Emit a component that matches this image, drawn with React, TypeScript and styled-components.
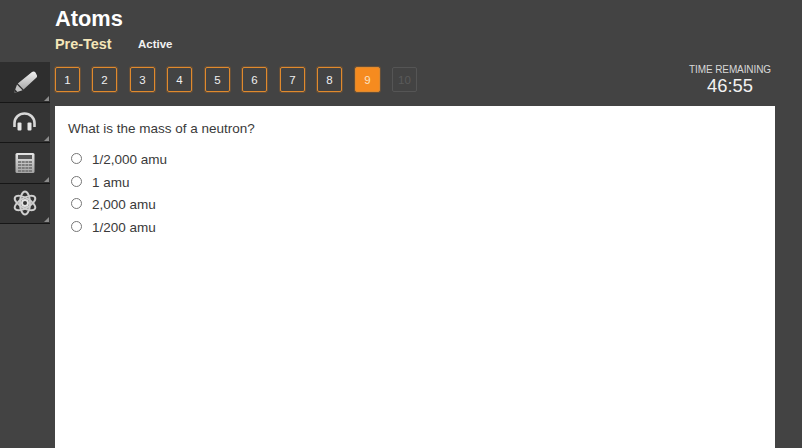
import React from 'react';
import styled, { createGlobalStyle } from 'styled-components';

const GlobalStyle = createGlobalStyle`
  html, body {
    margin: 0;
    height: 100%;
    background: #434343;
    font-family: "Liberation Sans", Arial, sans-serif;
    overflow: hidden;
  }
`;

const Page = styled.div`
  width: 802px;
  height: 448px;
  overflow: hidden;
  display: flex;
  background: #434343;
`;

const Sidebar = styled.nav`
  width: 50px;
  padding-top: 62px;
  margin-right: 5px;
  flex: none;
`;

const ToolButton = styled.div<{ $active?: boolean }>`
  position: relative;
  width: 50px;
  height: 40.5px;
  box-sizing: border-box;
  display: flex;
  align-items: center;
  justify-content: center;
  background: ${(p) => (p.$active ? '#2e2e2e' : '#343434')};
  border-bottom: 1px solid #161616;
  &::after {
    content: '';
    position: absolute;
    right: 1px;
    bottom: 1px;
    border-style: solid;
    border-width: 0 0 5px 5px;
    border-color: transparent transparent #8c8c8c transparent;
  }
`;

const Main = styled.main`
  width: 720px;
  flex: none;
  display: flex;
  flex-direction: column;
`;

const Header = styled.header`
  height: 62px;
  padding-top: 6px;
  box-sizing: border-box;
`;

const Title = styled.h1`
  margin: 0;
  font-size: 21.8px;
  line-height: 25px;
  font-weight: 700;
  color: #fff;
`;

const SubRow = styled.div`
  display: flex;
  align-items: center;
  margin-top: 5px;
`;

const Subtitle = styled.span`
  font-size: 14.4px;
  font-weight: 700;
  color: #f5e6b8;
  width: 83px;
`;

const Status = styled.span`
  font-size: 11.5px;
  font-weight: 700;
  color: #f2f2f2;
`;

const NavRow = styled.div`
  height: 44px;
  display: flex;
  align-items: flex-start;
  justify-content: space-between;
  padding-top: 5px;
  box-sizing: border-box;
`;

const Pager = styled.div`
  display: flex;
  gap: 12px;
`;

type PageState = 'default' | 'current' | 'disabled';

const PageButton = styled.div<{ $state: PageState }>`
  width: 25px;
  height: 25px;
  box-sizing: border-box;
  display: flex;
  align-items: center;
  justify-content: center;
  border-radius: 2px;
  font-size: 11.5px;
  border: 1px solid ${(p) => (p.$state === 'disabled' ? '#555' : '#e08a2e')};
  box-shadow: ${(p) => (p.$state === 'disabled' ? 'none' : '0 0 0 1px rgba(190, 110, 30, 0.3)')};
  background: ${(p) => (p.$state === 'current' ? '#f68b1f' : 'transparent')};
  color: ${(p) => (p.$state === 'disabled' ? '#5a5a5a' : p.$state === 'current' ? '#fbe3c4' : '#f0f0f0')};
  &:nth-child(2n + 3) {
    margin-left: 1px;
  }
`;

const Timer = styled.div`
  width: 84px;
  margin-right: 3px;
  margin-top: -3px;
  text-align: center;
  color: #d8d8d8;
`;

const TimerLabel = styled.div`
  font-size: 10px;
  letter-spacing: -0.1px;
  line-height: 12px;
  white-space: nowrap;
`;

const TimerValue = styled.div`
  font-size: 18.4px;
  line-height: 20px;
  color: #f2f2f2;
`;

const Content = styled.section`
  flex: 1;
  background: #fff;
  padding: 15px 13px;
  color: #3a3a3a;
`;

const Question = styled.p`
  margin: 0 0 12.3px;
  font-size: 13.5px;
  line-height: 15px;
`;

const Options = styled.div`
  display: flex;
  flex-direction: column;
`;

const Option = styled.label`
  height: 22.6px;
  display: flex;
  align-items: center;
  font-size: 13.5px;
`;

const Radio = styled.span`
  width: 11px;
  height: 11px;
  box-sizing: border-box;
  border: 1px solid #767676;
  border-radius: 50%;
  margin: -2px 10px 0 3px;
  background: #fff;
`;

const pages = [1, 2, 3, 4, 5, 6, 7, 8, 9, 10];
const answers = ['1/2,000 amu', '1 amu', '2,000 amu', '1/200 amu'];

const Pencil = () => (
  <svg width="26" height="26" viewBox="0 0 26 26">
    <defs>
      <linearGradient id="toolGrad" x1="0" y1="0" x2="0" y2="1">
        <stop offset="0" stopColor="#f0f0f0" />
        <stop offset="1" stopColor="#a8a8a8" />
      </linearGradient>
    </defs>
    <path d="M20 3 Q22 1.8 23.5 3.5 L25 6.5 Q25.5 8 24 9 L11.5 20.5 L5.8 14.5 Z" fill="url(#toolGrad)" />
    <path d="M5 15.5 L10.5 21.3 L2 24 Z" fill="#c4c4c4" />
    <path d="M2 24 L3.2 20.5 L5.4 22.8 Z" fill="#333" />
  </svg>
);

const Headphones = () => (
  <svg width="26" height="24" viewBox="0 0 26 24">
    <path d="M2.5 17 V13 a10 9.5 0 0 1 20 0 V17" fill="none" stroke="#d8d8d8" strokeWidth="2.6" />
    <rect x="5.5" y="12.5" width="4" height="8" rx="1" fill="#e6e6e6" />
    <rect x="15.5" y="12.5" width="4" height="8" rx="1" fill="#e6e6e6" />
  </svg>
);

const Calculator = () => (
  <svg width="22" height="24" viewBox="0 0 22 24">
    <defs>
      <linearGradient id="calcGrad" x1="0" y1="0" x2="0" y2="1">
        <stop offset="0" stopColor="#e4e4e4" />
        <stop offset="1" stopColor="#a4a4a4" />
      </linearGradient>
    </defs>
    <rect x="1.5" y="2" width="19" height="20" rx="1.5" fill="url(#calcGrad)" />
    <rect x="4" y="4" width="14" height="4" fill="#555" />
    {[10, 13, 16, 19].map((y) =>
      [4, 7.7, 11.4, 15].map((x) => (
        <rect key={`${x}-${y}`} x={x} y={y} width="3" height="2" fill="#7c7c7c" />
      ))
    )}
  </svg>
);

const Atom = () => (
  <svg width="26" height="26" viewBox="0 0 26 26" fill="none" stroke="#cfcfcf" strokeWidth="2">
    <ellipse cx="13" cy="13" rx="11.5" ry="5" transform="rotate(90 13 13)" />
    <ellipse cx="13" cy="13" rx="11.5" ry="5" transform="rotate(30 13 13)" />
    <ellipse cx="13" cy="13" rx="11.5" ry="5" transform="rotate(150 13 13)" />
    <circle cx="13" cy="13" r="3" fill="#343434" stroke="#e4e4e4" strokeWidth="2" />
  </svg>
);

export default function App(): React.ReactElement {
  return (
    <Page>
      <GlobalStyle />
      <Sidebar>
        <ToolButton $active><Pencil /></ToolButton>
        <ToolButton><Headphones /></ToolButton>
        <ToolButton><Calculator /></ToolButton>
        <ToolButton><Atom /></ToolButton>
      </Sidebar>
      <Main>
        <Header>
          <Title>Atoms</Title>
          <SubRow>
            <Subtitle>Pre-Test</Subtitle>
            <Status>Active</Status>
          </SubRow>
        </Header>
        <NavRow>
          <Pager>
            {pages.map((n) => (
              <PageButton key={n} $state={n === 9 ? 'current' : n === 10 ? 'disabled' : 'default'}>
                {n}
              </PageButton>
            ))}
          </Pager>
          <Timer>
            <TimerLabel>TIME REMAINING</TimerLabel>
            <TimerValue>46:55</TimerValue>
          </Timer>
        </NavRow>
        <Content>
          <Question>What is the mass of a neutron?</Question>
          <Options>
            {answers.map((a) => (
              <Option key={a}>
                <Radio />
                {a}
              </Option>
            ))}
          </Options>
        </Content>
      </Main>
    </Page>
  );
}
